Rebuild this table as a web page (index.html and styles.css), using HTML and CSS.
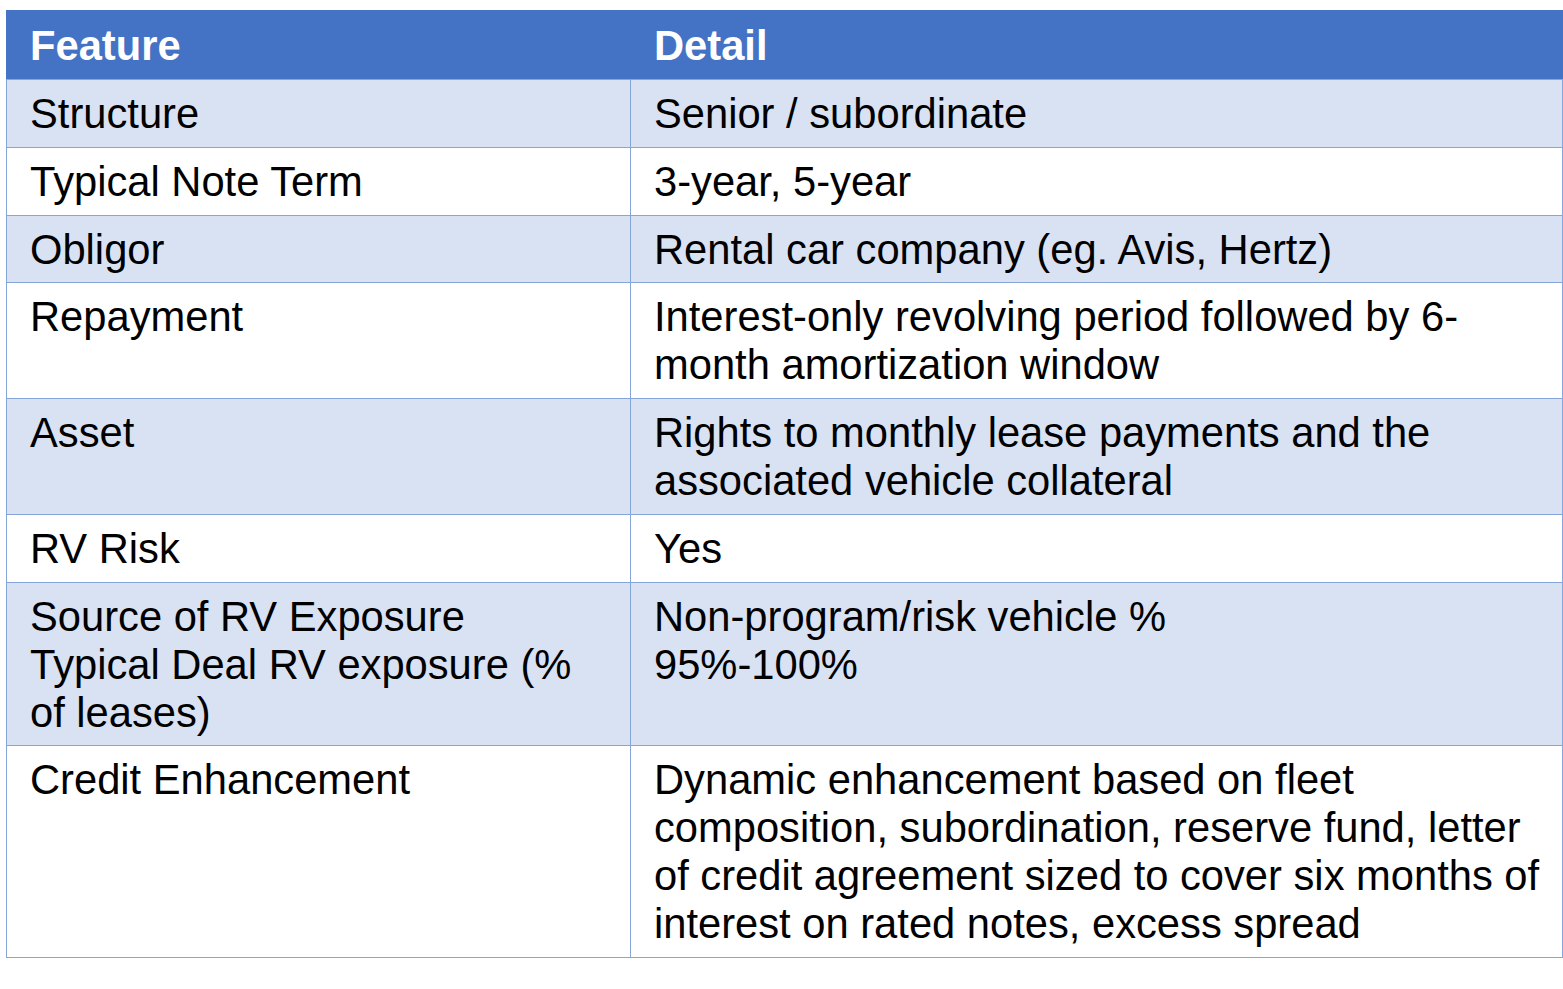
FILE: index.html
```html
<!DOCTYPE html>
<html>
<head>
<meta charset="utf-8">
<link rel="stylesheet" href="styles.css">
</head>
<body>
<table class="grid">
  <colgroup><col class="c1"><col class="c2"></colgroup>
  <thead>
    <tr><th>Feature</th><th>Detail</th></tr>
  </thead>
  <tbody>
    <tr class="band"><td>Structure</td><td>Senior / subordinate</td></tr>
    <tr><td>Typical Note Term</td><td>3-year, 5-year</td></tr>
    <tr class="band"><td>Obligor</td><td>Rental car company (eg. Avis, Hertz)</td></tr>
    <tr><td>Repayment</td><td>Interest-only revolving period followed by 6-<br>month amortization window</td></tr>
    <tr class="band"><td>Asset</td><td>Rights to monthly lease payments and the<br>associated vehicle collateral</td></tr>
    <tr><td>RV Risk</td><td>Yes</td></tr>
    <tr class="band"><td>Source of RV Exposure<br>Typical Deal RV exposure (%<br>of leases)</td><td>Non-program/risk vehicle %<br>95%-100%</td></tr>
    <tr><td>Credit Enhancement</td><td>Dynamic enhancement based on fleet<br>composition, subordination, reserve fund, letter<br>of credit agreement sized to cover six months of<br>interest on rated notes, excess spread</td></tr>
  </tbody>
</table>
</body>
</html>
```
FILE: styles.css
```css
html, body {
  margin: 0;
  padding: 0;
  background: #ffffff;
}
body {
  padding: 10px 0 0 6px;
  font-family: "Liberation Sans", Arial, sans-serif;
  font-size: 41.7px;
  line-height: 48px;
  color: #000000;
}
.grid {
  border-collapse: collapse;
  width: 1556px;
  table-layout: fixed;
}
.c1 { width: 624px; }
.c2 { width: 932px; }
.grid th, .grid td {
  border: 1px solid #86a5d9;
  padding: 10px 6px 8.75px 23px;
  text-align: left;
  vertical-align: top;
  white-space: nowrap;
}
.grid th {
  background: #4472c4;
  color: #ffffff;
  font-weight: bold;
  padding-top: 11px;
  padding-bottom: 9px;
  border-color: #4472c4 #4472c4 #86a5d9 #4472c4;
}
.grid tr.band td {
  background: #d9e2f3;
}
```
